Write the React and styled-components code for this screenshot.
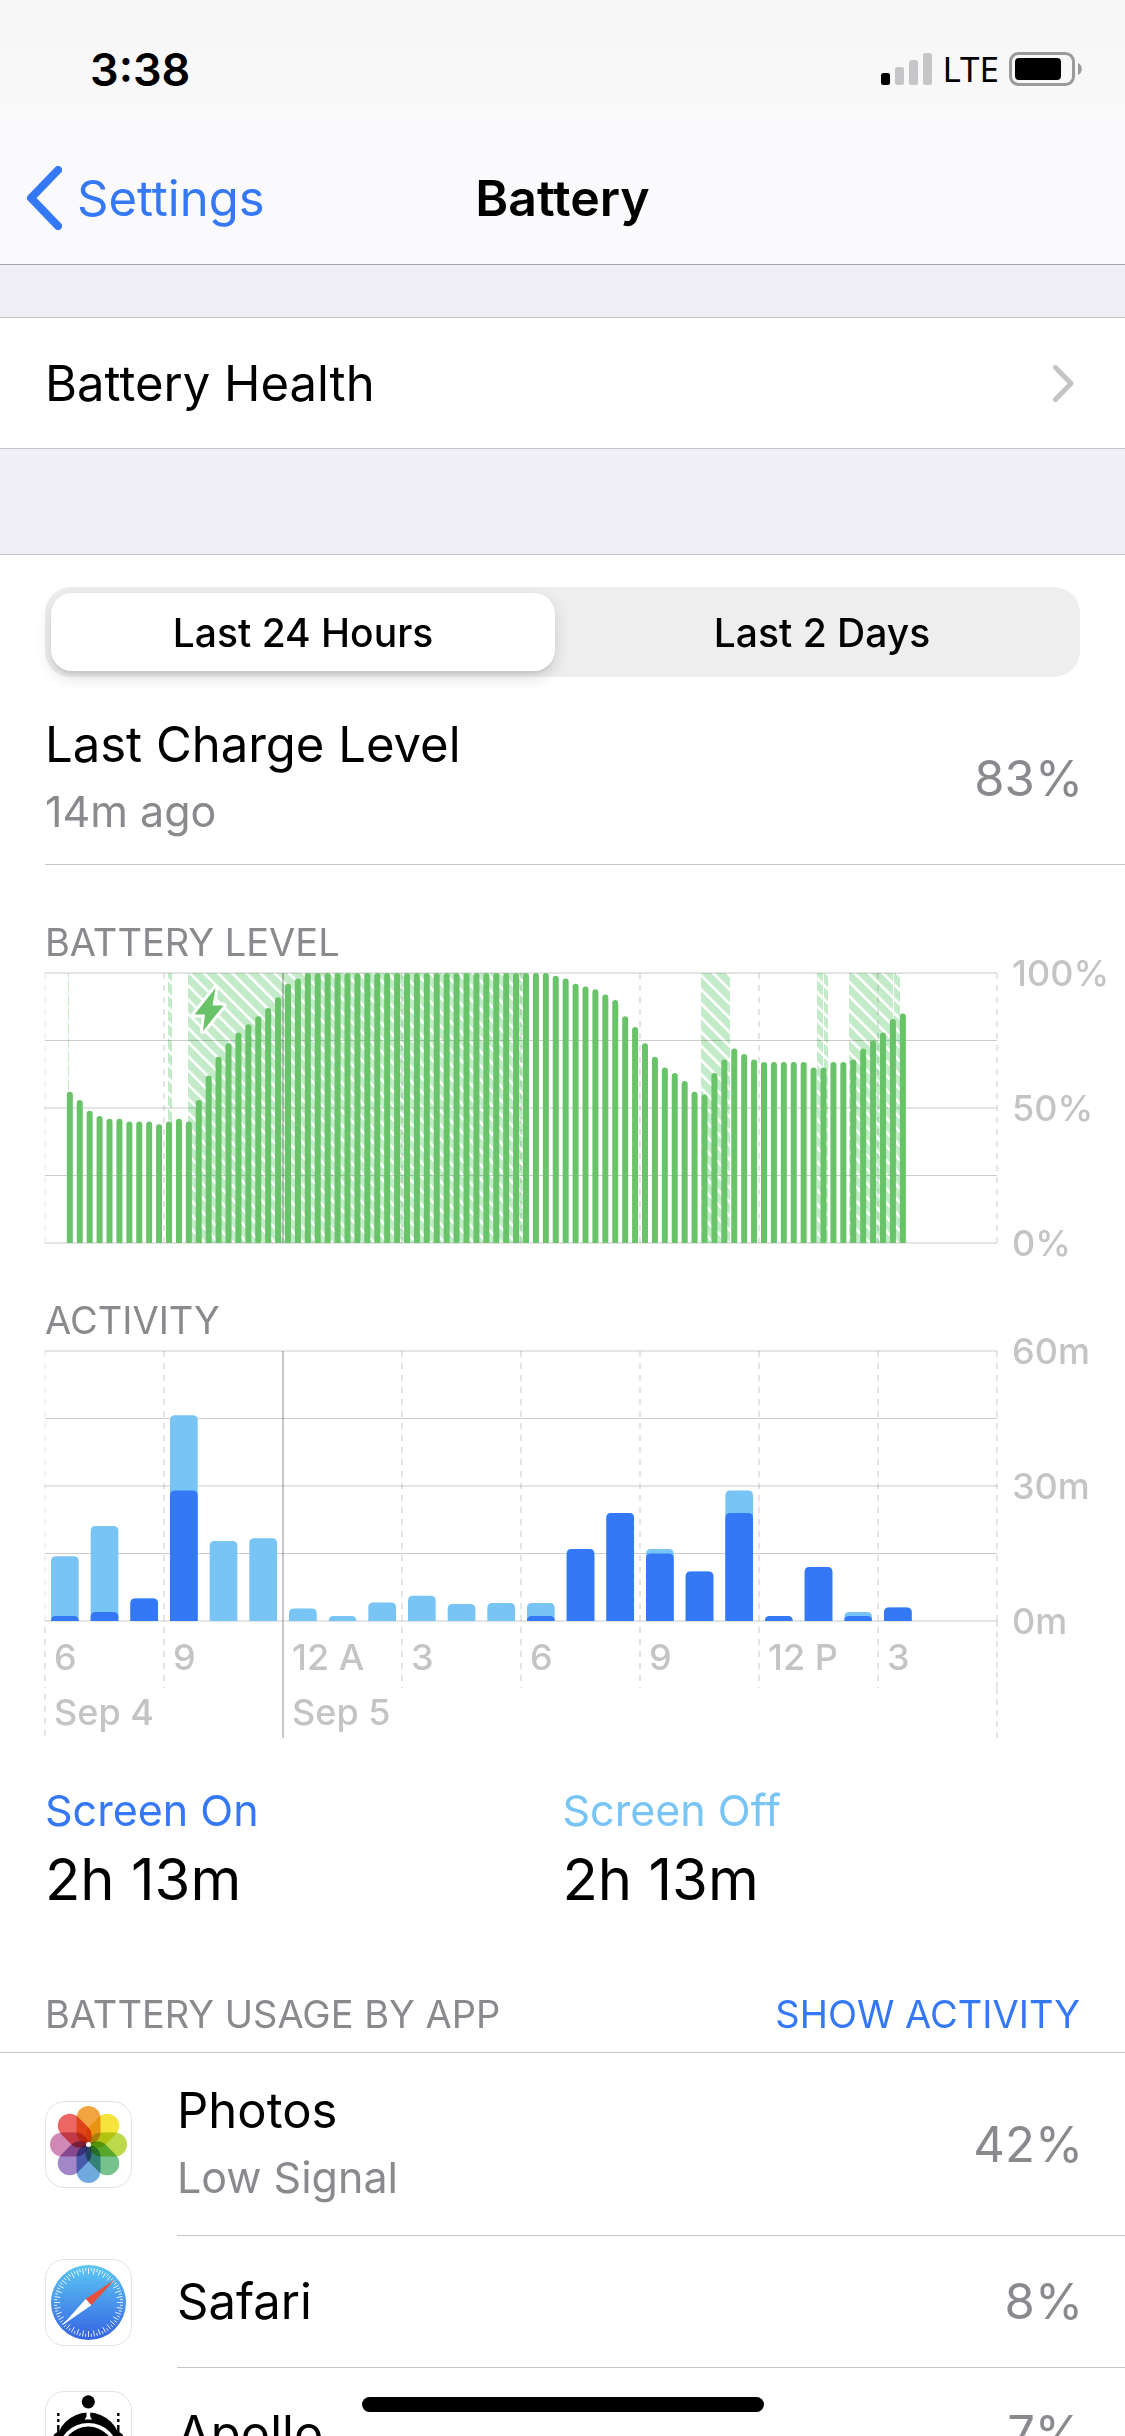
import styled, { createGlobalStyle } from "styled-components";
import { useState } from "react";

const GlobalStyle = createGlobalStyle`
  :root {
    --blue: #3478f6;
    --sky: #78c4f5;
    --green: #68c369;
    --gray: #8a8a8e;
    --light-gray: #c4c4c6;
    --separator: #c6c6c8;
    --group: #f0eff5;
  }
  * {
    box-sizing: border-box;
  }
  body {
    margin: 0;
    background: #fff;
    color: #000;
    font-family: Inter, "Liberation Sans", sans-serif;
    font-size: 49px;
  }
  button {
    font: inherit;
    border: 0;
    padding: 0;
    cursor: pointer;
  }
  a {
    color: inherit;
    text-decoration: none;
  }
  h1, h2, p, ul, dl, dd {
    margin: 0;
    padding: 0;
  }
`;
const Screen = styled.div`
  height: 100vh;
  display: flex;
  flex-direction: column;
  overflow: hidden;
`;
const Header = styled.header`
  flex: none;
  background: linear-gradient(#f6f6f7, #fafafc 50%);
  border-bottom: 1px solid #a8a8ac;
`;
const StatusBar = styled.div`
  display: flex;
  justify-content: space-between;
  align-items: center;
  height: 136px;
  padding: 2px 43px 0 90px;
`;
const Time = styled.span`
  font-size: 45px;
  font-weight: 600;
`;
const StatusIcons = styled.div`
  display: flex;
  align-items: center;
  gap: 10px;
`;
const Carrier = styled.span`
  font-family: "Noto Sans", sans-serif;
  font-size: 35px;
  line-height: 36px;
`;
const NavBar = styled.nav`
  display: grid;
  grid-template-columns: 1fr auto 1fr;
  align-items: center;
  height: 128px;
  padding: 0 26px 4px;
`;
const BackLink = styled.a`
  display: flex;
  align-items: center;
  gap: 15px;
  color: var(--blue);
`;
const Title = styled.h1`
  font-size: 50px;
  font-weight: 600;
`;
const Content = styled.main`
  flex: 1;
  min-height: 0;
  overflow-y: auto;
  scrollbar-width: none;
  background: var(--group);
`;
const Group = styled.section`
  background: #fff;
  border-top: 1px solid var(--separator);
  border-bottom: 1px solid var(--separator);
  margin-top: ${props => props.$gap};
`;
const HealthLink = styled.a`
  display: flex;
  align-items: center;
  justify-content: space-between;
  height: 130px;
  padding: 0 51px 0 45px;
`;
const Segments = styled.div`
  display: grid;
  grid-template-columns: 1fr 1fr;
  gap: 15px;
  margin: 32px 45px 0;
  padding: 6px;
  border-radius: 26px;
  background: #eeeeef;
`;
const Segment = styled.button`
  height: 78px;
  border-radius: 21px;
  font-size: 39px;
  font-weight: 500;
  color: #000;
  background: ${props => props.$active ? "#fff" : "transparent"};
  box-shadow: ${props => props.$active ? "0 6px 16px rgba(0, 0, 0, 0.14), 0 3px 2px rgba(0, 0, 0, 0.05)" : "none"};
`;
const ChargeRow = styled.div`
  display: flex;
  align-items: center;
  justify-content: space-between;
  margin-left: 45px;
  padding: 35px 42px 20px 0;
  border-bottom: 1px solid var(--separator);
`;
const Label = styled.p`
  line-height: 66px;
`;
const SubLabel = styled.p`
  font-size: 43px;
  line-height: 66px;
  color: var(--gray);
`;
const Percent = styled.span`
  color: var(--gray);
`;
const Caption = styled.h2`
  font-size: 38px;
  font-weight: 400;
  line-height: 48px;
  color: var(--gray);
`;
const ChartSection = styled.div`
  padding: 53px 0 0 45px;
`;
const ChartRow = styled.div`
  display: grid;
  grid-template-columns: 1fr 128px;
  padding-top: 7px;
`;
const ChartSvg = styled.svg`
  display: block;
  width: 100%;
  height: auto;
  overflow: visible;
`;
const AxisLabels = styled.div`
  display: flex;
  flex-direction: column;
  justify-content: space-between;
  margin: -20px 0;
  padding-left: 15px;
  font-size: 36px;
  font-weight: 500;
  line-height: 40px;
  color: var(--light-gray);
`;
const HourRow = styled.div`
  display: grid;
  grid-template-columns: repeat(${props => props.$columns}, 1fr);
  margin: 0 127px 0 -1px;
  border-right: 2px dashed #e4e4e6;
`;
const Tick = styled.span`
  height: ${props => props.$tall ? "50px" : "67px"};
  padding-left: 10px;
  font-size: 36px;
  font-weight: 500;
  line-height: ${props => props.$tall ? "48px" : "72px"};
  white-space: nowrap;
  color: var(--light-gray);
  background: ${props => props.$solid
    ? "linear-gradient(#c8c8ca, #c8c8ca)"
    : "repeating-linear-gradient(transparent 0 6px, #e4e4e6 6px 12px)"} 0 0 / 2px 100% no-repeat;
`;
const Totals = styled.dl`
  display: grid;
  grid-template-columns: 1fr 1fr;
  padding: 40px 0 0 45px;
  margin-right: 45px;
`;
const TotalName = styled.dt`
  font-size: 43px;
  line-height: 64px;
  color: ${props => props.color};
`;
const TotalValue = styled.dd`
  font-size: 58px;
  line-height: 74px;
`;
const ListHeader = styled.div`
  display: flex;
  justify-content: space-between;
  align-items: center;
  padding: 74px 45px 14px;
  border-bottom: 1px solid var(--separator);
`;
const ActivityButton = styled.button`
  font-size: 38px;
  line-height: 48px;
  color: var(--blue);
  background: none;
`;
const AppList = styled.ul`
  list-style: none;
`;
const AppRow = styled.li`
  display: flex;
  align-items: center;
  gap: 45px;
  padding-left: 45px;
`;
const AppInfo = styled.div`
  flex: 1;
  display: flex;
  align-items: center;
  justify-content: space-between;
  min-height: 132px;
  padding: ${props => props.$detail ? "25px 42px 25px 0" : "0 42px 0 0"};
  border-bottom: 1px solid var(--separator);
`;
const AppIcon = styled.svg`
  flex: none;
  display: block;
  width: 87px;
  height: 87px;
`;
const HomeIndicator = styled.div`
  position: fixed;
  left: 50%;
  bottom: 24px;
  width: 402px;
  height: 15px;
  border-radius: 8px;
  background: #000;
  transform: translateX(-50%);
`;

const CHART_WIDTH = 952;
const CHART_HEIGHT = 270;
const LEVEL_STEP = CHART_WIDTH / 96;
const HOUR_STEP = CHART_WIDTH / 24;

// one sample every 15 minutes, the first one at 6:30
const levels = [
  56, 53, 49, 47, 46, 46, 45, 45, 45, 44, 45, 46, 45, 53, 62, 69, 74, 78, 81, 84, 87, 91, 96, 98,
  ...Array(25).fill(100),
  99, 98, 96, 95, 94, 92, 90, 84, 80, 74, 69, 65, 63, 60, 56, 55, 63, 68, 72, 70, 68,
  67, 67, 67, 67, 67, 65, 65, 67, 67, 68, 72, 75, 78, 83, 85,
];

const chargingSpans = [
  { x: 23, width: 1 },
  { x: 123, width: 4 },
  { x: 143, width: 337 },
  { x: 656, width: 29 },
  { x: 772, width: 6 },
  { x: 779, width: 4 },
  { x: 804, width: 44 },
  { x: 849, width: 6 },
];

// minutes per hour: total activity and the part with the screen on
const activity = [
  { total: 14.4, on: 1.1 }, { total: 21.1, on: 2 }, { total: 5, on: 5 },
  { total: 45.7, on: 29 }, { total: 17.8, on: 0 }, { total: 18.4, on: 0 },
  { total: 2.8, on: 0 }, { total: 1.1, on: 0 }, { total: 4.1, on: 0 },
  { total: 5.6, on: 0 }, { total: 3.8, on: 0 }, { total: 4, on: 0 },
  { total: 4, on: 1.1 }, { total: 16, on: 16 }, { total: 24, on: 24 },
  { total: 16, on: 15 }, { total: 11, on: 11 }, { total: 29, on: 24 },
  { total: 1.1, on: 1.1 }, { total: 12, on: 12 }, { total: 2, on: 1.1 },
  { total: 3, on: 3 },
];

const hours = ["6", "9", "12 A", "3", "6", "9", "12 P", "3"];

const barPath = (x, width, height, radius) => {
  const r = Math.min(radius, height);
  const top = CHART_HEIGHT - height;
  return `M${x} ${CHART_HEIGHT}V${top + r}Q${x} ${top} ${x + r} ${top}H${x + width - r}Q${x + width} ${top} ${x + width} ${top + r}V${CHART_HEIGHT}Z`;
};

const GridLines = () => (
  <g>
    {[0, 135, 270].map(y => (
      <line key={y} x1="0" x2={CHART_WIDTH} y1={y} y2={y} stroke="#000" strokeOpacity="0.1" strokeWidth="2"/>
    ))}
    {[67.5, 202.5].map(y => (
      <line key={y} x1="0" x2={CHART_WIDTH} y1={y} y2={y} stroke="#000" strokeOpacity="0.2"/>
    ))}
    {[0, 1, 3, 4, 5, 6, 7, 8].map(i => (
      <line
        key={i}
        x1={i * 119}
        x2={i * 119}
        y1="0"
        y2={CHART_HEIGHT}
        stroke="#000"
        strokeOpacity="0.1"
        strokeWidth={i === 0 ? 1 : 2}
        strokeDasharray="6 6"
      />
    ))}
    <line x1="238" x2="238" y1="0" y2={CHART_HEIGHT} stroke="#000" strokeOpacity="0.22" strokeWidth="2"/>
  </g>
);

const LevelChart = () => (
  <ChartSvg viewBox={`0 0 ${CHART_WIDTH} ${CHART_HEIGHT}`} role="img" aria-label="Battery level">
    <defs>
      <pattern id="charging" width="10" height="10" patternUnits="userSpaceOnUse" patternTransform="rotate(-45)">
        <rect width="10" height="10" fill="#c4ebc9"/>
        <rect x="1" width="2.6" height="10" fill="#fff"/>
      </pattern>
    </defs>
    {chargingSpans.map(span => (
      <rect key={span.x} x={span.x} y="0" width={span.width} height={CHART_HEIGHT} fill="url(#charging)"/>
    ))}
    <GridLines/>
    {levels.map((level, index) => (
      <path
        key={`${index}-level`}
        d={barPath((index + 2) * LEVEL_STEP + 2, 6, level * 2.7, 3)}
        fill="var(--green)"
      />
    ))}
    <path
      d="M170.5 15L149.5 41.5H160L158 58L178.5 32.5H167.5Z"
      fill="var(--green)"
      stroke="#fff"
      strokeWidth="6"
      strokeLinejoin="round"
      paintOrder="stroke"
    />
  </ChartSvg>
);

const ActivityChart = () => (
  <ChartSvg viewBox={`0 0 ${CHART_WIDTH} ${CHART_HEIGHT}`} role="img" aria-label="Activity">
    <GridLines/>
    {activity.map((item, index) => {
      const x = index * HOUR_STEP + 6;
      return (
        <g key={`${index}-hour`}>
          <path d={barPath(x, 27.7, item.total * 4.5, 5)} fill="var(--sky)"/>
          {item.on > 0 && <path d={barPath(x, 27.7, item.on * 4.5, 5)} fill="var(--blue)"/>}
        </g>
      );
    })}
  </ChartSvg>
);

const Petal = styled.rect`
  mix-blend-mode: multiply;
`;
const Flower = styled.g`
  isolation: isolate;
`;

const petals = ["#f2a440", "#f4e43c", "#bcd94c", "#76c28c", "#70a9dd", "#a287c8", "#d088b4", "#ec6663"];

const IconFrame = () => (
  <rect x="0.5" y="0.5" width="86" height="86" rx="19" fill="#fff" stroke="#e2e2e4"/>
);

const PhotosIcon = () => (
  <AppIcon viewBox="0 0 87 87" aria-hidden="true">
    <IconFrame/>
    <Flower>
      {petals.map((color, index) => (
        <Petal
          key={color}
          x="31.5"
          y="5"
          width="24"
          height="38"
          rx="12"
          fill={color}
          transform={`rotate(${index * 45} 43.5 43.5)`}
        />
      ))}
    </Flower>
    <circle cx="43.5" cy="43.5" r="2.5" fill="#fff"/>
  </AppIcon>
);

const SafariIcon = () => (
  <AppIcon viewBox="0 0 87 87" aria-hidden="true">
    <defs>
      <linearGradient id="compass" x1="0" y1="0" x2="0" y2="1">
        <stop offset="0" stopColor="#5cc8f4"/>
        <stop offset="1" stopColor="#3563e2"/>
      </linearGradient>
    </defs>
    <IconFrame/>
    <circle cx="43.5" cy="43.5" r="37.5" fill="url(#compass)"/>
    {Array.from({ length: 72 }, (_, i) => (
      <line
        key={i}
        x1="43.5"
        x2="43.5"
        y1="9"
        y2={i % 2 === 0 ? 15 : 12}
        stroke="#fff"
        strokeWidth="0.8"
        transform={`rotate(${i * 5} 43.5 43.5)`}
      />
    ))}
    <path d="M70 20.5L40.7 40L46.3 46.2Z" fill="#e8503c"/>
    <path d="M17 66.5L40.7 40L46.3 46.2Z" fill="#fff"/>
  </AppIcon>
);

const ApolloIcon = () => (
  <AppIcon viewBox="0 0 87 87" aria-hidden="true">
    <defs>
      <clipPath id="apollo-frame">
        <rect x="1" y="1" width="85" height="85" rx="19"/>
      </clipPath>
    </defs>
    <IconFrame/>
    <g clipPath="url(#apollo-frame)">
      <circle cx="43.3" cy="10.8" r="6.6"/>
      <circle cx="43.3" cy="53.5" r="32"/>
      <path d="M13.3 22V25M13.3 28V31M13.3 34V44M73.3 22V25M73.3 28V31M73.3 34V44" stroke="#000" strokeWidth="2.4"/>
      <circle cx="14" cy="47" r="6"/>
      <circle cx="72.6" cy="47" r="6"/>
      <path d="M41.5 20H45.2V25.5L47 28.5H39.7L41.5 25.5Z" fill="#fff"/>
      <circle cx="43.3" cy="62.6" r="30.6" fill="#fff"/>
      <circle cx="43.3" cy="62.6" r="27"/>
    </g>
  </AppIcon>
);

const apps = [
  { name: "Photos", detail: "Low Signal", percent: "42%", Icon: PhotosIcon },
  { name: "Safari", percent: "8%", Icon: SafariIcon },
  { name: "Apollo", percent: "7%", Icon: ApolloIcon },
];

const ranges = ["Last 24 Hours", "Last 2 Days"];

const App = () => {
  const [range, setRange] = useState(ranges[0]);

  return (
    <Screen>
      <GlobalStyle/>
      <Header>
        <StatusBar>
          <Time>3:38</Time>
          <StatusIcons>
            <svg width="51" height="33" viewBox="0 0 51 33" aria-hidden="true">
              <rect y="20" width="9" height="12" rx="2.5"/>
              <rect x="14" y="14" width="9" height="18" rx="2.5" fill="#c6c6c8"/>
              <rect x="28" y="7" width="9" height="25" rx="2.5" fill="#c6c6c8"/>
              <rect x="42" width="9" height="32" rx="2.5" fill="#c6c6c8"/>
            </svg>
            <Carrier>LTE</Carrier>
            <svg width="73" height="34" viewBox="0 0 73 34" aria-hidden="true">
              <rect x="1.5" y="1.5" width="63" height="31" rx="8" fill="none" stroke="#9b9b9d" strokeWidth="3"/>
              <rect x="6" y="6" width="46" height="22" rx="4"/>
              <path d="M69 11C74 13 74 21 69 23Z" fill="#9b9b9d"/>
            </svg>
          </StatusIcons>
        </StatusBar>
        <NavBar>
          <BackLink href="#settings">
            <svg width="36" height="64" viewBox="0 0 36 64" aria-hidden="true">
              <path d="M32 4L5 32L32 60" fill="none" stroke="currentColor" strokeWidth="8" strokeLinecap="round" strokeLinejoin="round"/>
            </svg>
            Settings
          </BackLink>
          <Title>Battery</Title>
        </NavBar>
      </Header>
      <Content>
        <Group $gap="52px">
          <HealthLink href="#battery-health">
            Battery Health
            <svg width="21" height="37" viewBox="0 0 21 37" aria-hidden="true">
              <path d="M2.5 2.5L18 18.5L2.5 34.5" fill="none" stroke="#c4c4c6" strokeWidth="5" strokeLinecap="round" strokeLinejoin="round"/>
            </svg>
          </HealthLink>
        </Group>
        <Group $gap="105px">
          <Segments>
            {ranges.map(item => (
              <Segment
                key={item}
                $active={item === range}
                aria-pressed={item === range}
                onClick={() => setRange(item)}
              >
                {item}
              </Segment>
            ))}
          </Segments>
          <ChargeRow>
            <div>
              <Label>Last Charge Level</Label>
              <SubLabel>14m ago</SubLabel>
            </div>
            <Percent>83%</Percent>
          </ChargeRow>
          <ChartSection>
            <Caption>BATTERY LEVEL</Caption>
            <ChartRow>
              <LevelChart/>
              <AxisLabels>
                <span>100%</span>
                <span>50%</span>
                <span>0%</span>
              </AxisLabels>
            </ChartRow>
          </ChartSection>
          <ChartSection>
            <Caption>ACTIVITY</Caption>
            <ChartRow>
              <ActivityChart/>
              <AxisLabels>
                <span>60m</span>
                <span>30m</span>
                <span>0m</span>
              </AxisLabels>
            </ChartRow>
            <HourRow $columns={8}>
              {hours.map((hour, index) => (
                <Tick key={`${index}-tick`} $solid={index === 2}>{hour}</Tick>
              ))}
            </HourRow>
            <HourRow $columns={4}>
              <Tick $tall>Sep 4</Tick>
              <Tick $tall $solid>Sep 5</Tick>
            </HourRow>
          </ChartSection>
          <Totals>
            <div>
              <TotalName color="var(--blue)">Screen On</TotalName>
              <TotalValue>2h 13m</TotalValue>
            </div>
            <div>
              <TotalName color="var(--sky)">Screen Off</TotalName>
              <TotalValue>2h 13m</TotalValue>
            </div>
          </Totals>
          <ListHeader>
            <Caption>BATTERY USAGE BY APP</Caption>
            <ActivityButton>SHOW ACTIVITY</ActivityButton>
          </ListHeader>
          <AppList>
            {apps.map(({ name, detail, percent, Icon }) => (
              <AppRow key={name}>
                <Icon/>
                <AppInfo $detail={detail}>
                  <div>
                    <Label>{name}</Label>
                    {detail && <SubLabel>{detail}</SubLabel>}
                  </div>
                  <Percent>{percent}</Percent>
                </AppInfo>
              </AppRow>
            ))}
          </AppList>
        </Group>
      </Content>
      <HomeIndicator/>
    </Screen>
  );
}

export default App;
